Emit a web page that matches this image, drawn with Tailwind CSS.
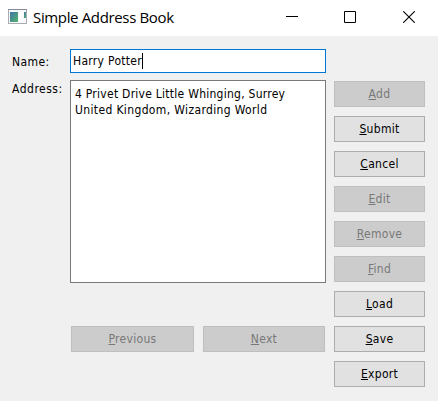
<!DOCTYPE html>
<html lang="en">
<head>
<meta charset="utf-8">
<title>Simple Address Book</title>
<script src="https://cdn.jsdelivr.net/npm/@tailwindcss/browser@4"></script>
</head>
<body class="w-[438px] h-[401px] overflow-hidden bg-[#f0f0f0] text-black text-[12px] leading-4 font-['DejaVu_Sans_Condensed','DejaVu_Sans',sans-serif] [font-stretch:condensed]">
<header class="flex h-9 items-center bg-white pl-2">
  <svg class="mt-[-3px] h-4 w-[19px] shrink-0" viewBox="0 0 19 16" shape-rendering="crispEdges">
    <defs><linearGradient id="g" x1="0" y1="0" x2="1" y2="1"><stop offset="0" stop-color="#3d73a8"/><stop offset="1" stop-color="#55b56b"/></linearGradient></defs>
    <rect x="0" y="0" width="19" height="15" fill="#a9acb2"/>
    <rect x="0" y="0" width="19" height="1" fill="#858b96"/>
    <rect x="1" y="1" width="17" height="13" fill="#f8f8fa"/>
    <rect x="2" y="3" width="8" height="10" fill="url(#g)"/>
    <rect x="11" y="3" width="4" height="10" fill="#fff"/>
    <rect x="16" y="3" width="2" height="6" fill="url(#g)"/>
  </svg>
  <h1 class="ml-[6px] mt-[-2px] grow whitespace-nowrap font-['Open_Sans',sans-serif] text-[15px] leading-5 tracking-[-0.35px] [font-stretch:normal]">Simple Address Book</h1>
  <div class="mr-[23px] flex items-center gap-[46px]">
    <svg class="h-3 w-3" viewBox="0 0 12 12"><path d="M0 4.5h12" stroke="#000"/></svg>
    <svg class="h-3 w-3 mt-[-2px]" viewBox="0 0 12 12"><path d="M.5.5h11v11H.5z" fill="none" stroke="#000"/></svg>
    <svg class="ml-[1px] mt-[-2px] h-3 w-3" viewBox="0 0 12 12"><path d="M.2.2l11.6 11.6M11.8.2L.2 11.8" stroke="#000" stroke-width="1.1"/></svg>
  </div>
</header>
<main class="flex h-[365px] pl-3 pt-[13px]">
  <div class="w-[58px] shrink-0">
    <div class="pt-[5px] tracking-[0.4px]">Name:</div>
    <div class="mt-[11px] tracking-[0.5px]">Address:</div>
  </div>
  <div class="w-64 shrink-0">
    <div class="flex h-6 items-center border border-[#0078d7] bg-white pl-[2px]"><span class="whitespace-nowrap tracking-[0.3px]">Harry Potter</span><span class="h-4 w-px bg-black"></span></div>
    <div class="mt-[7px] h-[203px] whitespace-nowrap border border-[#7a7a7a] bg-white pl-1 pt-[5px]">
      <p class="tracking-[0.26px]">4 Privet Drive Little Whinging, Surrey</p>
      <p class="tracking-[0.36px]">United Kingdom, Wizarding World</p>
    </div>
    <div class="mt-[43px] flex gap-[9px] pl-px tracking-[0.3px] text-[#787878]">
      <button class="h-[26px] w-[123px] border border-[#bfbfbf] bg-[#ccc]"><u class="underline-offset-[1px]">P</u>revious</button>
      <button class="h-[26px] w-[122px] border border-[#bfbfbf] bg-[#ccc]"><u class="underline-offset-[1px]">N</u>ext</button>
    </div>
  </div>
  <div class="ml-2 flex w-[91px] flex-col gap-[9px] pt-8 tracking-[0.3px]">
    <button class="h-[26px] border border-[#bfbfbf] bg-[#ccc] text-[#787878]"><u class="underline-offset-[1px]">A</u>dd</button>
    <button class="h-[26px] border border-[#adadad] bg-[#e1e1e1]"><u class="underline-offset-[1px]">S</u>ubmit</button>
    <button class="h-[26px] border border-[#adadad] bg-[#e1e1e1]"><u class="underline-offset-[1px]">C</u>ancel</button>
    <button class="h-[26px] border border-[#bfbfbf] bg-[#ccc] text-[#787878]"><u class="underline-offset-[1px]">E</u>dit</button>
    <button class="h-[26px] border border-[#bfbfbf] bg-[#ccc] text-[#787878]"><u class="underline-offset-[1px]">R</u>emove</button>
    <button class="h-[26px] border border-[#bfbfbf] bg-[#ccc] text-[#787878]"><u class="underline-offset-[1px]">F</u>ind</button>
    <button class="h-[26px] border border-[#adadad] bg-[#e1e1e1]"><u class="underline-offset-[1px]">L</u>oad</button>
    <button class="h-[26px] border border-[#adadad] bg-[#e1e1e1]"><u class="underline-offset-[1px]">S</u>ave</button>
    <button class="h-[26px] border border-[#adadad] bg-[#e1e1e1]"><u class="underline-offset-[1px]">E</u>xport</button>
  </div>
</main>
</body>
</html>
